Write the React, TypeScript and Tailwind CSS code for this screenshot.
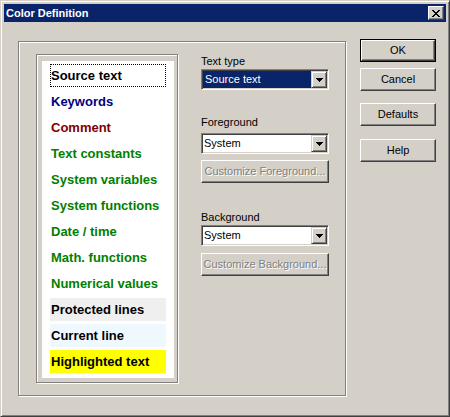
import React from "react";

type Item = { t: string; c: string; bg?: string; focus?: boolean };

const items: Item[] = [
  { t: "Source text", c: "text-black", focus: true },
  { t: "Keywords", c: "text-[#000080]" },
  { t: "Comment", c: "text-[#800000]" },
  { t: "Text constants", c: "text-[#008000]" },
  { t: "System variables", c: "text-[#008000]" },
  { t: "System functions", c: "text-[#008000]" },
  { t: "Date / time", c: "text-[#008000]" },
  { t: "Math. functions", c: "text-[#008000]" },
  { t: "Numerical values", c: "text-[#008000]" },
  { t: "Protected lines", c: "text-black", bg: "bg-[#efefef]" },
  { t: "Current line", c: "text-black", bg: "bg-[#f0f8ff]" },
  { t: "Highlighted text", c: "text-black", bg: "bg-[#ffff00]" },
];

function Arrow() {
  return (
    <svg width="7" height="4" viewBox="0 0 7 4" shapeRendering="crispEdges">
      <rect x="0" y="0" width="7" height="1" fill="#000" />
      <rect x="1" y="1" width="5" height="1" fill="#000" />
      <rect x="2" y="2" width="3" height="1" fill="#000" />
      <rect x="3" y="3" width="1" height="1" fill="#000" />
    </svg>
  );
}

function Combo({ value, selected }: { value: string; selected?: boolean }) {
  return (
    <div className="h-[21px] w-[128px] box-border border border-t-[#808080] border-l-[#808080] border-b-white border-r-white bg-white shadow-[inset_1px_1px_0_#404040,inset_-1px_-1px_0_#d4d0c8] p-[1px] flex">
      <div
        className={
          "flex-1 h-[17px] leading-[17px] text-[11px] " +
          (selected ? "bg-[#0a246a] text-white pl-[2px]" : "text-black pl-[1px]")
        }
      >
        {value}
      </div>
      <div className="w-[16px] h-[17px] box-border bg-[#d4d0c8] border border-t-[#d4d0c8] border-l-[#d4d0c8] border-b-[#404040] border-r-[#404040] shadow-[inset_1px_1px_0_#fff,inset_-1px_-1px_0_#808080] flex items-center justify-center">
        <Arrow />
      </div>
    </div>
  );
}

function Btn({
  children,
  w,
  disabled,
  def,
}: {
  children: React.ReactNode;
  w: string;
  disabled?: boolean;
  def?: boolean;
}) {
  const inner = (
    <div
      className={
        "h-full w-full box-border bg-[#d4d0c8] border border-t-white border-l-white border-b-[#404040] border-r-[#404040] shadow-[inset_-1px_-1px_0_#808080] flex items-center justify-center text-[11px] " +
        (disabled ? "text-[#808080] [text-shadow:1px_1px_0_#fff]" : "text-black")
      }
    >
      {children}
    </div>
  );
  if (def) {
    return <div className={"h-[23px] box-border border border-black " + w}>{inner}</div>;
  }
  return <div className={"h-[23px] " + w}>{inner}</div>;
}

function CloseIcon() {
  const rows = ["11000011", "01100110", "00111100", "00011000", "00111100", "01100110", "11000011"];
  return (
    <svg width="8" height="7" viewBox="0 0 8 7" shapeRendering="crispEdges">
      {rows.flatMap((r, y) =>
        r.split("").map((ch, x) =>
          ch === "1" ? <rect key={x + "-" + y} x={x} y={y} width="1" height="1" fill="#000" /> : null
        )
      )}
    </svg>
  );
}

export default function App() {
  return (
    <div className="w-[450px] h-[417px] box-border bg-[#d4d0c8] border border-t-[#d4d0c8] border-l-[#d4d0c8] border-b-[#404040] border-r-[#404040] shadow-[inset_1px_1px_0_#fff,inset_-1px_-1px_0_#808080] p-[3px] font-['Liberation_Sans',Arial,sans-serif] flex flex-col">
      {/* title bar */}
      <div className="h-[18px] bg-[#0a246a] flex items-center justify-between pr-[2px]">
        <div className="pl-[2px] text-white font-bold text-[11px] leading-[18px]">Color Definition</div>
        <div className="w-[16px] h-[14px] box-border bg-[#d4d0c8] border border-t-white border-l-white border-b-[#404040] border-r-[#404040] shadow-[inset_-1px_-1px_0_#808080] flex items-center justify-center">
          <CloseIcon />
        </div>
      </div>

      {/* body */}
      <div className="flex items-start pl-[14px]">
        {/* group box */}
        <div className="mt-[19px] w-[328px] h-[355px] box-border border border-[#808080] shadow-[1px_1px_0_#fff,inset_1px_1px_0_#fff] flex items-start">
          {/* list frame */}
          <div className="ml-[17px] mt-[12px] w-[142px] h-[329px] box-border border border-[#808080] shadow-[1px_1px_0_#fff,inset_1px_1px_0_#fff] pl-[5px] pt-[6px]">
            <div className="w-[132px] h-[317px] bg-white pl-[8px] pt-[3px] flex flex-col gap-[3px]">
              {items.map((it) => (
                <div
                  key={it.t}
                  className={
                    "w-[116px] h-[23px] box-border border font-bold text-[13px] leading-[21px] whitespace-nowrap " +
                    it.c +
                    " " +
                    (it.bg ?? "") +
                    " " +
                    (it.focus ? "border-dotted border-black" : "border-transparent")
                  }
                >
                  {it.t}
                </div>
              ))}
            </div>
          </div>

          {/* right column */}
          <div className="ml-[23px] w-[128px] flex flex-col">
            <div className="mt-[13px] h-[13px] leading-[13px] text-[11px] text-black">Text type</div>
            <div className="mt-[1px]">
              <Combo value="Source text" selected />
            </div>
            <div className="mt-[26px] h-[13px] leading-[13px] text-[11px] text-black">Foreground</div>
            <div className="mt-[4px]">
              <Combo value="System" />
            </div>
            <div className="mt-[6px]">
              <Btn w="w-[128px]" disabled>
                Customize Foreground...
              </Btn>
            </div>
            <div className="mt-[28px] h-[13px] leading-[13px] text-[11px] text-black">Background</div>
            <div className="mt-[1px]">
              <Combo value="System" />
            </div>
            <div className="mt-[7px]">
              <Btn w="w-[128px]" disabled>
                Customize Background...
              </Btn>
            </div>
          </div>
        </div>

        {/* buttons */}
        <div className="ml-[14px] mt-[17px] flex flex-col">
          <Btn w="w-[76px]" def>
            OK
          </Btn>
          <div className="mt-[6px]">
            <Btn w="w-[76px]">Cancel</Btn>
          </div>
          <div className="mt-[12px]">
            <Btn w="w-[76px]">Defaults</Btn>
          </div>
          <div className="mt-[13px]">
            <Btn w="w-[76px]">Help</Btn>
          </div>
        </div>
      </div>
    </div>
  );
}
